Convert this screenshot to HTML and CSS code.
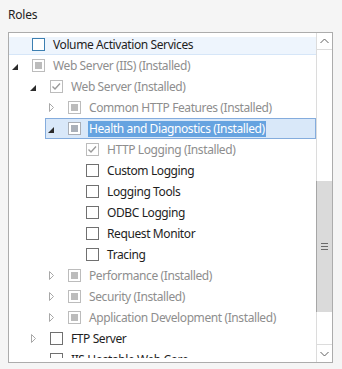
FILE: index.html
```html
<!DOCTYPE html>
<html lang="en">
<head>
<meta charset="UTF-8">
<title>Roles</title>
<link rel="stylesheet" href="styles.css">
</head>
<body>
    <div class="roles">
        <div class="roles-title">Roles</div>
        <div class="listbox">
            <div class="tree">
                <div class="tree-view">
                    <div class="tree-rows">
                        <div class="row hover">
                            <span class="exp"></span>
                            <span class="cb hot"></span>
                            <span class="label">Volume Activation Services</span>
                        </div>
                        <div class="row">
                            <span class="exp"><svg width="12" height="21"><polygon points="9,9 9,15 3,15" fill="#2b2b2b"/></svg></span>
                            <span class="cb part"></span>
                            <span class="label dim">Web Server (IIS) (Installed)</span>
                        </div>
                        <div class="row l1">
                            <span class="exp"><svg width="12" height="21"><polygon points="9,9 9,15 3,15" fill="#2b2b2b"/></svg></span>
                            <span class="cb done"><svg width="11" height="11"><path d="M1.5 5.5 L4 8 L9 2.5" fill="none" stroke="#9a9a9a" stroke-width="1.4"/></svg></span>
                            <span class="label dim">Web Server (Installed)</span>
                        </div>
                        <div class="row l2">
                            <span class="exp"><svg width="12" height="21"><polygon points="4.5,6.5 8.5,10.5 4.5,14.5" fill="none" stroke="#a8a8a8"/></svg></span>
                            <span class="cb part"></span>
                            <span class="label dim">Common HTTP Features (Installed)</span>
                        </div>
                        <div class="row l2 selected">
                            <span class="exp"><svg width="12" height="21"><polygon points="9,9 9,15 3,15" fill="#2b2b2b"/></svg></span>
                            <span class="cb part"></span>
                            <span class="label">Health and Diagnostics (Installed)</span>
                        </div>
                        <div class="row l3">
                            <span class="exp"></span>
                            <span class="cb done"><svg width="11" height="11"><path d="M1.5 5.5 L4 8 L9 2.5" fill="none" stroke="#9a9a9a" stroke-width="1.4"/></svg></span>
                            <span class="label dim">HTTP Logging (Installed)</span>
                        </div>
                        <div class="row l3">
                            <span class="exp"></span>
                            <span class="cb"></span>
                            <span class="label">Custom Logging</span>
                        </div>
                        <div class="row l3">
                            <span class="exp"></span>
                            <span class="cb"></span>
                            <span class="label">Logging Tools</span>
                        </div>
                        <div class="row l3">
                            <span class="exp"></span>
                            <span class="cb"></span>
                            <span class="label">ODBC Logging</span>
                        </div>
                        <div class="row l3">
                            <span class="exp"></span>
                            <span class="cb"></span>
                            <span class="label">Request Monitor</span>
                        </div>
                        <div class="row l3">
                            <span class="exp"></span>
                            <span class="cb"></span>
                            <span class="label">Tracing</span>
                        </div>
                        <div class="row l2">
                            <span class="exp"><svg width="12" height="21"><polygon points="4.5,6.5 8.5,10.5 4.5,14.5" fill="none" stroke="#a8a8a8"/></svg></span>
                            <span class="cb part"></span>
                            <span class="label dim">Performance (Installed)</span>
                        </div>
                        <div class="row l2">
                            <span class="exp"><svg width="12" height="21"><polygon points="4.5,6.5 8.5,10.5 4.5,14.5" fill="none" stroke="#a8a8a8"/></svg></span>
                            <span class="cb part"></span>
                            <span class="label dim">Security (Installed)</span>
                        </div>
                        <div class="row l2">
                            <span class="exp"><svg width="12" height="21"><polygon points="4.5,6.5 8.5,10.5 4.5,14.5" fill="none" stroke="#a8a8a8"/></svg></span>
                            <span class="cb part"></span>
                            <span class="label dim">Application Development (Installed)</span>
                        </div>
                        <div class="row l1">
                            <span class="exp"><svg width="12" height="21"><polygon points="4.5,6.5 8.5,10.5 4.5,14.5" fill="none" stroke="#a8a8a8"/></svg></span>
                            <span class="cb"></span>
                            <span class="label">FTP Server</span>
                        </div>
                        <div class="row l1">
                            <span class="exp"></span>
                            <span class="cb"></span>
                            <span class="label">IIS Hostable Web Core</span>
                        </div>
                    </div>
                </div>
            </div>
            <div class="scrollbar">
                <div class="sb-btn sb-up"><svg width="9" height="6"><path d="M0.5 5 L4.5 1 L8.5 5" fill="none" stroke="#606060"/></svg></div>
                <div class="sb-track">
                    <div class="sb-thumb"><svg width="7" height="7"><path d="M0 0.5 H7 M0 3.5 H7 M0 6.5 H7" stroke="#6a6a6a"/></svg></div>
                </div>
                <div class="sb-btn sb-down"><svg width="9" height="6"><path d="M0.5 1 L4.5 5 L8.5 1" fill="none" stroke="#606060"/></svg></div>
            </div>
        </div>
    </div>
</body>
</html>
```

FILE: styles.css
```css
body {
    margin: 0;
    background-color: #f5f5f5;
    font-family: "Noto Sans", "Open Sans", sans-serif;
    font-size: 12px;
    color: #1e1e1e;
}
.roles {
    padding: 7px 0 0 8px;
    width: 325px;
}
.roles-title {
    line-height: 16px;
    margin-bottom: 9px;
    letter-spacing: -0.2px;
}
.listbox {
    display: flex;
    height: 331px;
    box-sizing: border-box;
    border: 1px solid #acacac;
    background-color: #fff;
}
.tree {
    flex: 1;
    padding: 4px 0;
}
.tree-view {
    height: 100%;
    overflow: hidden;
}
.tree-rows {
    margin-top: -3px;
}
.row {
    display: flex;
    align-items: center;
    height: 21px;
    white-space: nowrap;
}
.l1 { margin-left: 18px; }
.l2 { margin-left: 36px; }
.l3 { margin-left: 54px; }
.exp {
    flex: none;
    width: 23px;
    height: 21px;
}
.exp svg { display: block; }
.cb {
    flex: none;
    position: relative;
    width: 13px;
    height: 13px;
    box-sizing: border-box;
    border: 1px solid #707070;
    background-color: #fff;
}
.cb svg { display: block; }
.cb.hot { border-color: #3c7fb1; }
.cb.part,
.cb.done { border-color: #bcbcbc; }
.cb.part::after {
    content: "";
    position: absolute;
    left: 2px;
    top: 2px;
    width: 7px;
    height: 7px;
    background-color: #bcbcbc;
}
.selected .cb.part { border-color: #a9aeb6; }
.selected .cb.part::after { background-color: #aab0b9; }
.label {
    margin-left: 7px;
    padding: 0 1px;
    line-height: 16px;
    letter-spacing: -0.4px;
}
.dim { color: #8e8e8e; }
.hover {
    background-color: #eef5fd;
    box-shadow: inset 0 -1px #d6e6f8;
}
.selected {
    background-color: #d9e8f9;
    box-shadow: inset 0 0 0 1px #84acdd;
}
.selected .label {
    background-color: #66a3e0;
    color: #fff;
}
.scrollbar {
    flex: none;
    width: 15px;
    border-left: 1px solid #dcdcdc;
    display: flex;
    flex-direction: column;
}
.sb-btn {
    display: flex;
    align-items: center;
    justify-content: center;
}
.sb-up {
    height: 16px;
    border-bottom: 1px solid #dcdcdc;
}
.sb-down {
    height: 17px;
    border-top: 1px solid #dcdcdc;
}
.sb-track {
    flex: 1;
}
.sb-thumb {
    margin: 131px 0 0 -1px;
    height: 131px;
    border-left: 1px solid #a6a6a6;
    background-color: #dadada;
    display: flex;
    align-items: center;
    justify-content: center;
}
```
